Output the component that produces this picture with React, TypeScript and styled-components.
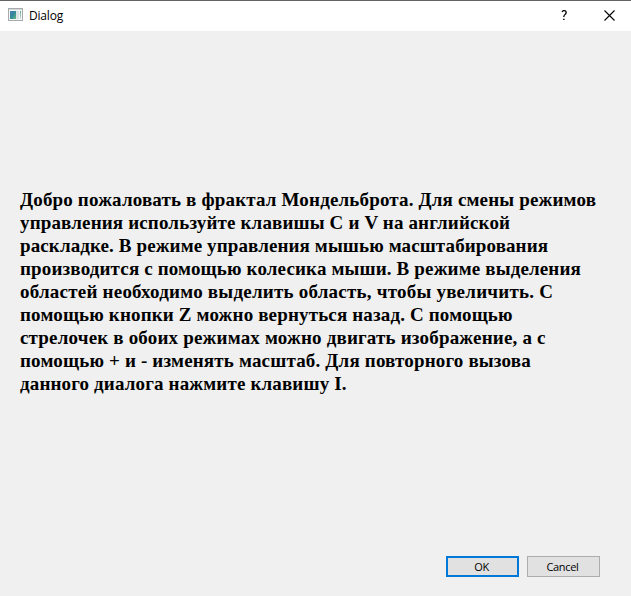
import React from "react";
import styled, { createGlobalStyle } from "styled-components";

const GlobalStyle = createGlobalStyle`
  html, body { margin: 0; padding: 0; overflow: hidden; }
`;

const Window = styled.div`
  box-sizing: border-box;
  width: 631px;
  height: 596px;
  display: flex;
  flex-direction: column;
  background: #f0f0f0;
  border-top: 1px solid #646464;
  color: #000;
`;

const TitleBar = styled.header`
  height: 30px;
  flex: none;
  display: flex;
  align-items: center;
  padding-left: 8px;
  background: #fff;
`;

const Title = styled.h1`
  flex: 1;
  margin: 0 0 0 6px;
  font: 400 12px/16px "Open Sans", sans-serif;
  letter-spacing: -0.2px;
`;

const CaptionButton = styled.button`
  width: 45px;
  height: 30px;
  padding: 0 0 1px 2px;
  border: 0;
  background: transparent;
  display: flex;
  align-items: center;
  justify-content: center;
`;

const Body = styled.main`
  flex: 1;
  display: flex;
  flex-direction: column;
  justify-content: space-between;
  padding: 157px 31px 19px 20px;
`;

const Message = styled.p`
  margin: 0;
  font: 700 19px/23px "Liberation Serif", "Times New Roman", serif;
`;

const Line = styled.span<{ $tracking: number }>`
  display: block;
  white-space: nowrap;
  letter-spacing: ${(p) => p.$tracking}px;
`;

const Actions = styled.footer`
  display: flex;
  justify-content: flex-end;
  gap: 8px;
`;

const PushButton = styled.button<{ $primary?: boolean }>`
  box-sizing: border-box;
  width: 73px;
  height: 21px;
  padding: 0 2px 0 0;
  border: ${(p) => (p.$primary ? "2px solid #0078d7" : "1px solid #adadad")};
  border-radius: 0;
  background: #e1e1e1;
  color: #000;
  display: flex;
  align-items: center;
  justify-content: center;
  font: 400 11px/15px "Open Sans", sans-serif;
  letter-spacing: -0.3px;
`;

const IconSvg = styled.svg`
  flex: none;
  margin-bottom: 3px;
`;

const message = [
  { text: "Добро пожаловать в фрактал Мондельброта. Для смены режимов", tracking: 0.16 },
  { text: "управления используйте клавишы C и V на английской", tracking: 0.15 },
  { text: "раскладке. В режиме управления мышью масштабирования", tracking: 0.11 },
  { text: "производится с помощью колесика мыши. В режиме выделения", tracking: 0.15 },
  { text: "областей необходимо выделить область, чтобы увеличить. С", tracking: 0.22 },
  { text: "помощью кнопки Z можно вернуться назад. С помощью", tracking: 0.15 },
  { text: "стрелочек в обоих режимах можно двигать изображение, а с", tracking: 0.18 },
  { text: "помощью + и - изменять масштаб. Для повторного вызова", tracking: 0.17 },
  { text: "данного диалога нажмите клавишу I.", tracking: 0.15 },
];

function AppIcon() {
  return (
    <IconSvg width="15" height="13" viewBox="0 0 15 13">
      <defs>
        <linearGradient id="pane" x1="0" y1="0" x2="1" y2="1">
          <stop offset="0" stopColor="#4a7fb8" />
          <stop offset="0.5" stopColor="#35889a" />
          <stop offset="1" stopColor="#62bd7c" />
        </linearGradient>
        <linearGradient id="side" x1="0" y1="0" x2="0" y2="1">
          <stop offset="0" stopColor="#5ba889" />
          <stop offset="1" stopColor="#d5dfdc" />
        </linearGradient>
      </defs>
      <rect x="0.5" y="0.5" width="14" height="12" fill="#f6f6f6" stroke="#a8abae" />
      <rect x="1" y="1" width="13" height="1" fill="#d4d8dc" />
      <rect x="2" y="3" width="6" height="8" fill="url(#pane)" />
      <rect x="8" y="3" width="3" height="8" fill="#dfe2e5" />
      <rect x="12" y="3" width="1" height="8" fill="url(#side)" />
    </IconSvg>
  );
}

export default function App() {
  return (
    <Window>
      <GlobalStyle />
      <TitleBar>
        <AppIcon />
        <Title>Dialog</Title>
        <CaptionButton aria-label="Help">
          <svg width="7" height="11" viewBox="0 0 7 11" fill="none" stroke="#000" strokeWidth="1.3">
            <path d="M1 1.8C1.6 .9 2.2.6 3 .6 4.4.6 5.2 1.4 5.2 2.5 5.2 4.3 2.8 4.5 2.8 7" />
            <path d="M2.1 9.4h1.5" />
          </svg>
        </CaptionButton>
        <CaptionButton aria-label="Close">
          <svg width="11" height="11" viewBox="0 0 11 11" stroke="#000" strokeWidth="1.1">
            <path d="M.5.5l10 10M10.5.5l-10 10" />
          </svg>
        </CaptionButton>
      </TitleBar>
      <Body>
        <Message>
          {message.map((line) => (
            <Line key={line.text} $tracking={line.tracking}>
              {line.text}
            </Line>
          ))}
        </Message>
        <Actions>
          <PushButton $primary>OK</PushButton>
          <PushButton>Cancel</PushButton>
        </Actions>
      </Body>
    </Window>
  );
}
